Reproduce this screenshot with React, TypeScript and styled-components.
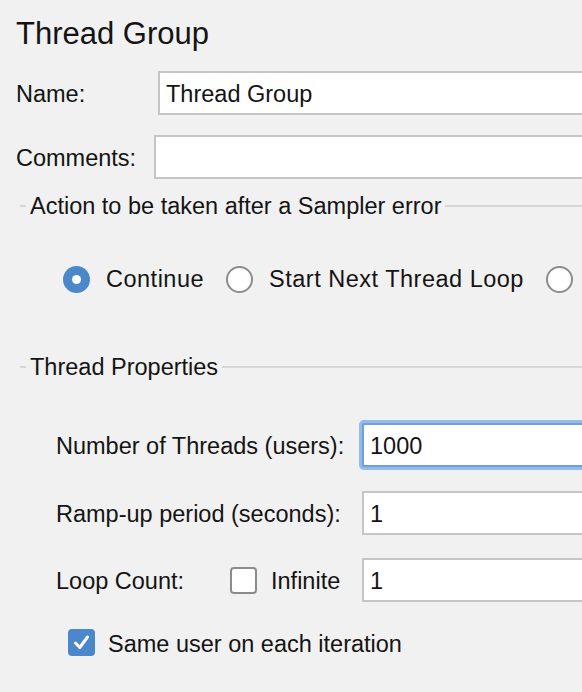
import React from 'react';
import styled, { createGlobalStyle } from "styled-components";

const GlobalStyle = createGlobalStyle`
	html, body {
		margin: 0;
		padding: 0;
		background: #f1f1f1;
	}
	body {
		font-family: "Liberation Sans", Arial, sans-serif;
		color: #141414;
		overflow: hidden;
	}
`;

const Page = styled.div`
	width: 582px;
	height: 692px;
	overflow: hidden;
	padding-left: 16px;
	box-sizing: border-box;
	font-size: 23.5px;
`;

const Title = styled.h1`
	margin: 16px 0 0 0;
	font-size: 31px;
	font-weight: 400;
	line-height: 36px;
	height: 35px;
`;

// labels sit a little low compared with the font's own centre
const Text = styled.span`
	padding-top: 4px;
	line-height: 1;
`;

const FieldRow = styled.div<{ $labelWidth: number; $top: number }>`
	display: flex;
	align-items: center;
	margin-top: ${p => p.$top}px;

	> span:first-child, > div:first-child {
		flex: 0 0 ${p => p.$labelWidth}px;
	}
`;

const TextField = styled.div<{ $focused?: boolean }>`
	flex: 1;
	height: 44px;
	margin-right: -40px;
	box-sizing: border-box;
	background: #fff;
	border: 2px solid ${p => (p.$focused ? '#6f9fdc' : '#c6c6c6')};
	border-radius: ${p => (p.$focused ? '2px' : '0')};
	box-shadow: ${p => (p.$focused ? '0 0 0 3px #94bbeb' : 'none')};
	padding: 4px 0 0 6px;
	display: flex;
	align-items: center;
	line-height: 1;
`;

const SectionHeader = styled.div<{ $top: number }>`
	display: flex;
	align-items: center;
	height: 30px;
	margin-top: ${p => p.$top}px;
	padding-left: 4px;

	&::before {
		content: '';
		width: 6px;
		height: 2px;
		background: #d6d6d6;
		margin-right: 4px;
	}
	&::after {
		content: '';
		flex: 1;
		height: 2px;
		background: #d6d6d6;
		margin-left: 4px;
	}
`;

const RadioRow = styled.div`
	display: flex;
	align-items: center;
	height: 28px;
	margin-top: 44px;
	padding-left: 47px;
	white-space: nowrap;
	letter-spacing: 0.5px;
`;

const RadioOption = styled.span`
	display: inline-flex;
	align-items: center;
	gap: 16px;
	margin-right: 22px;
	flex-shrink: 0;
`;

const RadioDot = styled.span<{ $checked?: boolean }>`
	width: 27px;
	height: 27px;
	border-radius: 50%;
	box-sizing: border-box;
	flex-shrink: 0;
	display: inline-flex;
	align-items: center;
	justify-content: center;
	background: ${p => (p.$checked ? '#4b87cb' : '#fff')};
	border: ${p => (p.$checked ? 'none' : '2px solid #8c8c8c')};

	&::after {
		content: '';
		display: ${p => (p.$checked ? 'block' : 'none')};
		width: 9px;
		height: 9px;
		border-radius: 50%;
		background: #fff;
	}
`;

const PropsBlock = styled.div`
	padding-left: 40px;
`;

const LeftPart = styled.div`
	display: flex;
	align-items: center;

	> span:first-child {
		width: 174px;
	}
`;

const Box = styled.span<{ $checked?: boolean }>`
	width: 27px;
	height: 27px;
	box-sizing: border-box;
	border-radius: 4px;
	flex-shrink: 0;
	display: inline-flex;
	align-items: center;
	justify-content: center;
	background: ${p => (p.$checked ? '#4b87cb' : '#fff')};
	border: ${p => (p.$checked ? 'none' : '2px solid #8c8c8c')};
`;

const CheckLabel = styled.span<{ $gap: number }>`
	display: inline-flex;
	align-items: center;
	gap: ${p => p.$gap}px;
`;

const SameUserRow = styled.div`
	display: flex;
	margin-top: 27px;
	padding-left: 52px;
`;

const Check = () => (
	<svg width="17" height="17" viewBox="0 0 17 17">
		<path d="M2.5 9 L6.8 13.5 L14.5 3" fill="none" stroke="#fff" strokeWidth="3" strokeLinecap="round" strokeLinejoin="round" />
	</svg>
);

export default function App() {
	return (
		<>
			<GlobalStyle />
			<Page>
				<Title>Thread Group</Title>
				<FieldRow $labelWidth={142} $top={20}>
					<Text>Name:</Text>
					<TextField>Thread Group</TextField>
				</FieldRow>
				<FieldRow $labelWidth={138} $top={20}>
					<Text>Comments:</Text>
					<TextField />
				</FieldRow>

				<SectionHeader $top={12}>Action to be taken after a Sampler error</SectionHeader>
				<RadioRow>
					<RadioOption><RadioDot $checked />Continue</RadioOption>
					<RadioOption><RadioDot />Start Next Thread Loop</RadioOption>
					<RadioOption><RadioDot /></RadioOption>
				</RadioRow>

				<SectionHeader $top={59}>Thread Properties</SectionHeader>
				<PropsBlock>
					<FieldRow $labelWidth={306} $top={41}>
						<Text>Number of Threads (users):</Text>
						<TextField $focused>1000</TextField>
					</FieldRow>
					<FieldRow $labelWidth={306} $top={24}>
						<Text>Ramp-up period (seconds):</Text>
						<TextField>1</TextField>
					</FieldRow>
					<FieldRow $labelWidth={306} $top={23}>
						<LeftPart>
							<Text>Loop Count:</Text>
							<CheckLabel $gap={14}><Box /><Text>Infinite</Text></CheckLabel>
						</LeftPart>
						<TextField>1</TextField>
					</FieldRow>
				</PropsBlock>
				<SameUserRow>
					<CheckLabel $gap={13}>
						<Box $checked><Check /></Box>
						<Text>Same user on each iteration</Text>
					</CheckLabel>
				</SameUserRow>
			</Page>
		</>
	);
}
